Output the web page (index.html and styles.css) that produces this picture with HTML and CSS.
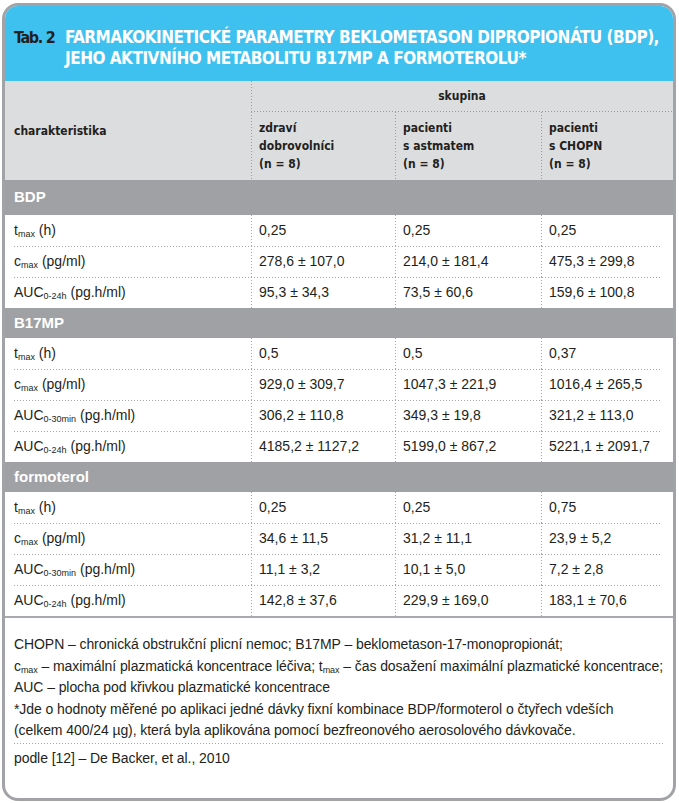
FILE: index.html
```html
<!DOCTYPE html>
<html lang="cs">
<head>
<meta charset="utf-8">
<title>Tab. 2</title>
<link rel="stylesheet" href="styles.css">
</head>
<body>
<div class="card">
  <header class="caption">
    <span class="tab">Tab. 2</span>
    <h1 class="title">FARMAKOKINETICKÉ PARAMETRY BEKLOMETASON DIPROPIONÁTU (BDP),<br>JEHO AKTIVNÍHO METABOLITU B17MP A FORMOTEROLU*</h1>
  </header>

  <div class="table">
    <div class="thead">
      <div class="th th-char">charakteristika</div>
      <div class="th th-group">skupina</div>
      <div class="th th-sub">zdraví<br>dobrovolníci<br>(n = 8)</div>
      <div class="th th-sub vl">pacienti<br>s astmatem<br>(n = 8)</div>
      <div class="th th-sub vl">pacienti<br>s CHOPN<br>(n = 8)</div>
    </div>

    <div class="section first">BDP</div>
    <div class="group">
      <div class="row"><div class="c lbl">t<sub>max</sub> (h)</div><div class="c">0,25</div><div class="c">0,25</div><div class="c">0,25</div></div>
      <div class="row"><div class="c lbl">c<sub>max</sub> (pg/ml)</div><div class="c">278,6 ± 107,0</div><div class="c">214,0 ± 181,4</div><div class="c">475,3 ± 299,8</div></div>
      <div class="row"><div class="c lbl">AUC<sub>0-24h</sub> (pg.h/ml)</div><div class="c">95,3 ± 34,3</div><div class="c">73,5 ± 60,6</div><div class="c">159,6 ± 100,8</div></div>
    </div>

    <div class="section">B17MP</div>
    <div class="group">
      <div class="row"><div class="c lbl">t<sub>max</sub> (h)</div><div class="c">0,5</div><div class="c">0,5</div><div class="c">0,37</div></div>
      <div class="row"><div class="c lbl">c<sub>max</sub> (pg/ml)</div><div class="c">929,0 ± 309,7</div><div class="c">1047,3 ± 221,9</div><div class="c">1016,4 ± 265,5</div></div>
      <div class="row"><div class="c lbl">AUC<sub>0-30min</sub> (pg.h/ml)</div><div class="c">306,2 ± 110,8</div><div class="c">349,3 ± 19,8</div><div class="c">321,2 ± 113,0</div></div>
      <div class="row"><div class="c lbl">AUC<sub>0-24h</sub> (pg.h/ml)</div><div class="c">4185,2 ± 1127,2</div><div class="c">5199,0 ± 867,2</div><div class="c">5221,1 ± 2091,7</div></div>
    </div>

    <div class="section">formoterol</div>
    <div class="group last">
      <div class="row"><div class="c lbl">t<sub>max</sub> (h)</div><div class="c">0,25</div><div class="c">0,25</div><div class="c">0,75</div></div>
      <div class="row"><div class="c lbl">c<sub>max</sub> (pg/ml)</div><div class="c">34,6 ± 11,5</div><div class="c">31,2 ± 11,1</div><div class="c">23,9 ± 5,2</div></div>
      <div class="row"><div class="c lbl">AUC<sub>0-30min</sub> (pg.h/ml)</div><div class="c">11,1 ± 3,2</div><div class="c">10,1 ± 5,0</div><div class="c">7,2 ± 2,8</div></div>
      <div class="row"><div class="c lbl">AUC<sub>0-24h</sub> (pg.h/ml)</div><div class="c">142,8 ± 37,6</div><div class="c">229,9 ± 169,0</div><div class="c">183,1 ± 70,6</div></div>
    </div>
  </div>

  <div class="notes">
    <p class="legend">CHOPN – chronická obstrukční plicní nemoc; B17MP – beklometason-17-monopropionát;<br>c<sub>max</sub> – maximální plazmatická koncentrace léčiva; t<sub>max</sub> – čas dosažení maximální plazmatické koncentrace;<br>AUC – plocha pod křivkou plazmatické koncentrace<br>*Jde o hodnoty měřené po aplikaci jedné dávky fixní kombinace BDP/formoterol o čtyřech vdeších<br>(celkem 400/24 µg), která byla aplikována pomocí bezfreonového aerosolového dávkovače.</p>
    <p class="source">podle [12] – De Backer, et al., 2010</p>
  </div>
</div>
</body>
</html>
```

FILE: styles.css
```css
* { box-sizing: border-box; }

html, body {
  margin: 0;
  padding: 0;
  background: #fff;
}

body {
  font-family: "Liberation Sans", Arial, sans-serif;
  color: #231f20;
}

.card {
  margin: 3px 0 0 2px;
  width: 674px;
  height: 798px;
  border: 3px solid #a2a3a6;
  border-radius: 16px;
  overflow: hidden;
  background: #fff;
}

/* ---------- caption ---------- */
.caption {
  display: flex;
  height: 75px;
  padding: 21px 0 0 9px;
  background: #3fc1f0;
  font-family: "DejaVu Sans Condensed", "DejaVu Sans", sans-serif;
  font-weight: bold;
  font-size: 17px;
  line-height: 21px;
}

.tab {
  width: 51px;
  flex: none;
  color: #231f20;
  font-size: 16px;
  letter-spacing: -1.3px;
}

.title {
  margin: 0;
  font: inherit;
  color: #fff;
  white-space: nowrap;
  letter-spacing: -0.5px;
}

/* ---------- table ---------- */
.table {
  border-bottom: 2px solid #a9aaad;
}

.thead,
.row {
  display: grid;
  grid-template-columns: 246px 144px 146px 132px;
}

.thead {
  grid-template-rows: 31px 68px;
  background: #dcddde;
  font-family: "DejaVu Sans Condensed", "DejaVu Sans", sans-serif;
  font-weight: bold;
  font-size: 12px;
  line-height: 18px;
}

.th-char {
  grid-row: 1 / 3;
  grid-column: 1;
  align-self: center;
  padding: 0 9px;
}

.th-group {
  grid-row: 1;
  grid-column: 2 / 5;
  text-align: center;
  padding-top: 6px;
  background:
    repeating-linear-gradient(90deg, #9a9b9e 0 1px, transparent 1px 3px) bottom / 100% 1px no-repeat,
    repeating-linear-gradient(180deg, #9a9b9e 0 1px, transparent 1px 3px) left / 1px 100% no-repeat;
}

.th-sub {
  grid-row: 2;
  padding: 7px 8px 0;
  background: repeating-linear-gradient(180deg, #9a9b9e 0 1px, transparent 1px 3px) left / 1px 100% no-repeat;
}

.section {
  height: 30px;
  padding: 0 9px;
  background: #a0a1a4;
  color: #fff;
  font-weight: bold;
  font-size: 15px;
  line-height: 30px;
}

.section.first {
  height: 35px;
  line-height: 33px;
}

.row {
  height: 31px;
  font-size: 14px;
  line-height: 31px;
}

.row + .row {
  background:
    linear-gradient(90deg, #fff 9px, transparent 9px calc(100% - 11px), #fff calc(100% - 11px)) top / 100% 1px no-repeat,
    repeating-linear-gradient(90deg, #a3a4a7 0 1px, transparent 1px 3px) top / 100% 1px no-repeat;
}

.c {
  padding: 0 8px;
  white-space: nowrap;
}

.c + .c {
  background: repeating-linear-gradient(180deg, #a3a4a7 0 1px, transparent 1px 3px) left / 1px 100% no-repeat;
}

.c.lbl {
  padding-left: 9px;
}

sub {
  font-size: 9px;
  line-height: 0;
  vertical-align: -2px;
}

/* ---------- notes ---------- */
.notes {
  padding: 16px 9px 0;
  font-size: 14px;
  letter-spacing: -0.08px;
  line-height: 21.5px;
}

.notes p {
  margin: 0;
  white-space: nowrap;
}

.legend {
  padding-bottom: 2px;
  background: repeating-linear-gradient(90deg, #a3a4a7 0 1px, transparent 1px 3px) bottom / 100% 1px no-repeat;
}

.source {
  padding-top: 4px;
}
```
